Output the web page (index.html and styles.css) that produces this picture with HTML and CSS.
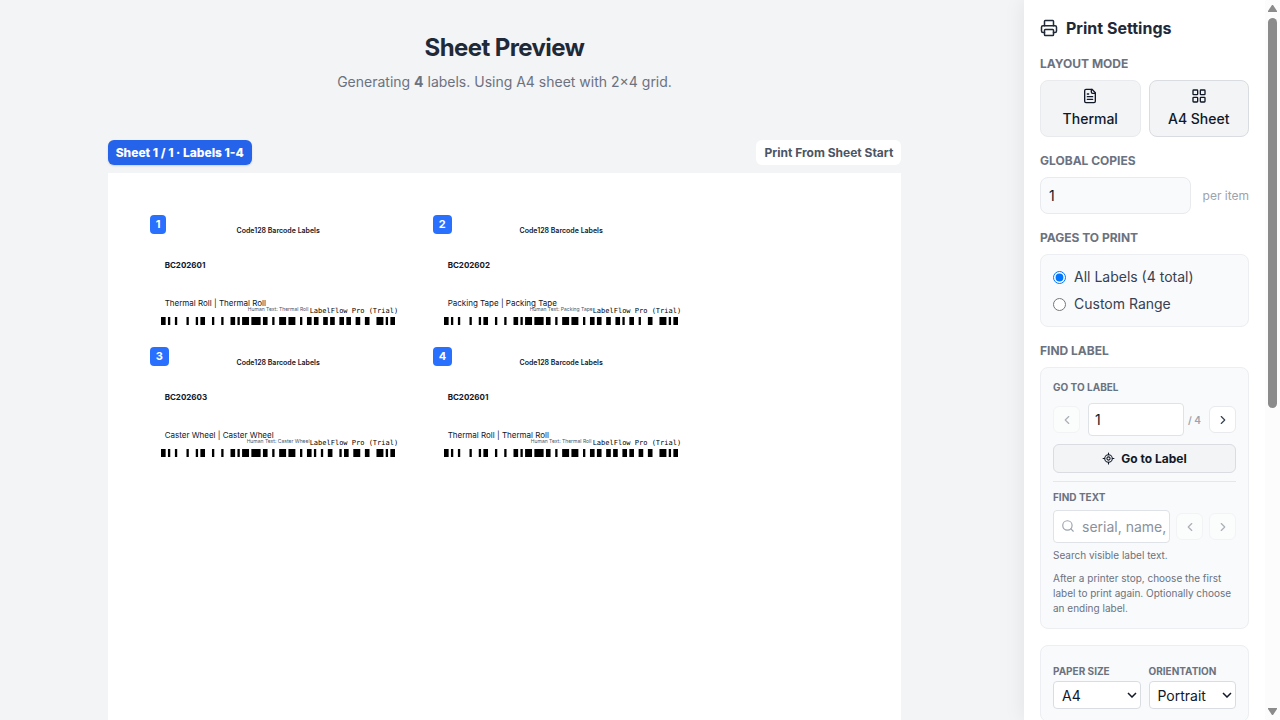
FILE: index.html
```html
<!DOCTYPE html>
<html lang="en">
<head>
  <meta charset="UTF-8">
  <meta name="viewport" content="width=device-width, initial-scale=1.0">
  <title>Print Settings</title>
  <link rel="stylesheet" href="styles.css">
</head>
<body>

  <div class="app">
    <main class="preview">
      <header class="preview-header">
        <h1>Sheet Preview</h1>
        <p>Generating <strong>4</strong> labels. Using A4 sheet with 2×4 grid.</p>
      </header>

      <section class="sheet-wrap">
        <div class="sheet-bar">
          <span class="sheet-tag">Sheet 1 / 1 · Labels 1-4</span>
          <button type="button" class="sheet-print">Print From Sheet Start</button>
        </div>

        <div class="sheet">
          <article class="label">
            <span class="badge">1</span>
            <h2 class="label-title">Code128 Barcode Labels</h2>
            <p class="label-code">BC202601</p>
            <p class="label-name">Thermal Roll | Thermal Roll</p>
            <p class="label-human">Human Text: Thermal Roll</p>
            <p class="watermark">LabelFlow Pro (Trial)</p>
            <svg class="barcode" viewBox="0 0 101 8" preserveAspectRatio="none" role="img" aria-label="BC202601"><path d="M0 4H101" stroke-dasharray="2 1 1 2 1 4 1 3 1 1 2 3 1 3 1 3 2 1 1 1 3 1 4 1 2 2 1 2 3 1 3 2 1 2 2 1 2 2 2 1 2 2 2 1 2 2 2 2 2 3 3 1 1 1 2 9"/></svg>
          </article>

          <article class="label">
            <span class="badge">2</span>
            <h2 class="label-title">Code128 Barcode Labels</h2>
            <p class="label-code">BC202602</p>
            <p class="label-name">Packing Tape | Packing Tape</p>
            <p class="label-human">Human Text: Packing Tape</p>
            <p class="watermark">LabelFlow Pro (Trial)</p>
            <svg class="barcode" viewBox="0 0 101 8" preserveAspectRatio="none" role="img" aria-label="BC202602"><path d="M0 4H101" stroke-dasharray="2 1 1 2 1 4 1 3 1 1 2 3 1 3 1 3 2 1 1 1 3 1 4 1 2 2 1 2 3 1 3 2 1 2 2 1 2 2 2 2 2 1 1 2 2 2 1 3 2 3 3 1 1 1 2 9"/></svg>
          </article>

          <article class="label">
            <span class="badge">3</span>
            <h2 class="label-title">Code128 Barcode Labels</h2>
            <p class="label-code">BC202603</p>
            <p class="label-name">Caster Wheel | Caster Wheel</p>
            <p class="label-human">Human Text: Caster Wheel</p>
            <p class="watermark">LabelFlow Pro (Trial)</p>
            <svg class="barcode" viewBox="0 0 101 8" preserveAspectRatio="none" role="img" aria-label="BC202603"><path d="M0 4H101" stroke-dasharray="2 1 1 2 1 4 1 3 1 1 2 3 1 3 1 3 2 1 1 1 3 1 4 1 2 2 1 2 3 1 3 2 1 2 2 1 1 2 1 2 2 3 1 1 2 2 3 2 2 3 3 1 1 1 2 9"/></svg>
          </article>

          <article class="label">
            <span class="badge">4</span>
            <h2 class="label-title">Code128 Barcode Labels</h2>
            <p class="label-code">BC202601</p>
            <p class="label-name">Thermal Roll | Thermal Roll</p>
            <p class="label-human">Human Text: Thermal Roll</p>
            <p class="watermark">LabelFlow Pro (Trial)</p>
            <svg class="barcode" viewBox="0 0 101 8" preserveAspectRatio="none" role="img" aria-label="BC202601"><path d="M0 4H101" stroke-dasharray="2 1 1 2 1 4 1 3 1 1 2 3 1 3 1 3 2 1 1 1 3 1 4 1 2 2 1 2 3 1 3 2 1 2 2 1 2 2 2 1 2 2 2 1 2 2 2 2 2 3 3 1 1 1 2 9"/></svg>
          </article>
        </div>
      </section>
    </main>

    <aside class="settings">
      <div class="settings-body">
        <h2 class="settings-title">
          <svg class="icon" width="18" height="18" viewBox="0 0 24 24"><path d="M6 18H4a2 2 0 0 1-2-2v-5a2 2 0 0 1 2-2h16a2 2 0 0 1 2 2v5a2 2 0 0 1-2 2h-2"/><path d="M6 9V3a1 1 0 0 1 1-1h10a1 1 0 0 1 1 1v6"/><rect x="6" y="14" width="12" height="8" rx="1"/></svg>
          Print Settings
        </h2>

        <section class="group">
          <h3>Layout Mode</h3>
          <div class="modes">
            <button type="button" class="mode">
              <svg class="icon" width="16" height="16" viewBox="0 0 24 24"><path d="M15 2H6a2 2 0 0 0-2 2v16a2 2 0 0 0 2 2h12a2 2 0 0 0 2-2V7Z"/><path d="M14 2v4a2 2 0 0 0 2 2h4"/><path d="M10 9H8M16 13H8M16 17H8"/></svg>
              Thermal
            </button>
            <button type="button" class="mode active">
              <svg class="icon" width="16" height="16" viewBox="0 0 24 24"><rect x="3" y="3" width="7" height="7" rx="1"/><rect x="14" y="3" width="7" height="7" rx="1"/><rect x="14" y="14" width="7" height="7" rx="1"/><rect x="3" y="14" width="7" height="7" rx="1"/></svg>
              A4 Sheet
            </button>
          </div>
        </section>

        <section class="group">
          <h3><label for="copies">Global Copies</label></h3>
          <div class="copies">
            <input type="text" inputmode="numeric" id="copies" value="1">
            <span>per item</span>
          </div>
        </section>

        <section class="group">
          <h3>Pages to Print</h3>
          <div class="card range">
            <label><input type="radio" name="range" checked> All Labels (4 total)</label>
            <label><input type="radio" name="range"> Custom Range</label>
          </div>
        </section>

        <section class="group">
          <h3>Find Label</h3>
          <div class="card find">
            <label class="small-label" for="goto">Go to Label</label>
            <div class="find-row">
              <button type="button" class="step" aria-label="Previous label" disabled><svg class="icon" width="14" height="14" viewBox="0 0 24 24"><path d="m15 18-6-6 6-6"/></svg></button>
              <div class="goto-field">
                <input type="text" inputmode="numeric" id="goto" value="1">
                <span class="total">/ 4</span>
              </div>
              <button type="button" class="step" aria-label="Next label"><svg class="icon" width="14" height="14" viewBox="0 0 24 24"><path d="m9 18 6-6-6-6"/></svg></button>
            </div>
            <button type="button" class="goto">
              <svg class="icon" width="13" height="13" viewBox="0 0 24 24"><path d="M2 12h3M19 12h3M12 2v3M12 19v3"/><circle cx="12" cy="12" r="7"/><circle cx="12" cy="12" r="3"/></svg>
              Go to Label
            </button>

            <div class="find-text">
              <label class="small-label" for="search">Find Text</label>
              <div class="find-row">
                <div class="search">
                  <svg class="icon" width="14" height="14" viewBox="0 0 24 24"><circle cx="11" cy="11" r="8"/><path d="m21 21-4-4"/></svg>
                  <input type="text" id="search" placeholder="serial, name, code">
                </div>
                <button type="button" class="step" aria-label="Previous match" disabled><svg class="icon" width="14" height="14" viewBox="0 0 24 24"><path d="m15 18-6-6 6-6"/></svg></button>
                <button type="button" class="step" aria-label="Next match" disabled><svg class="icon" width="14" height="14" viewBox="0 0 24 24"><path d="m9 18 6-6-6-6"/></svg></button>
              </div>
              <p class="hint">Search visible label text.</p>
            </div>
            <p class="hint">After a printer stop, choose the first label to print again. Optionally choose an ending label.</p>
          </div>
        </section>

        <section class="card paper">
          <div>
            <label class="small-label" for="paper">Paper Size</label>
            <select id="paper"><option>A4</option><option>Letter</option></select>
          </div>
          <div>
            <label class="small-label" for="orientation">Orientation</label>
            <select id="orientation"><option>Portrait</option><option>Landscape</option></select>
          </div>
        </section>
      </div>

      <div class="scrollbar" aria-hidden="true">
        <svg width="9" height="7" viewBox="0 0 9 7"><path d="M4 0h1l4 6v1H0V6z"/></svg>
        <div class="track"><div class="thumb"></div></div>
        <svg width="9" height="7" viewBox="0 0 9 7"><path d="M4 7h1l4-6V0H0v1z"/></svg>
      </div>
    </aside>
  </div>

</body>
</html>
```
FILE: styles.css
```css
* {
  box-sizing: border-box;
}

body {
  margin: 0;
  font-family: Inter, "Liberation Sans", sans-serif;
  color: #1f2937;
  background: #f3f4f6;
}

h1, h2, h3, p {
  margin: 0;
}

button, input, select {
  font-family: inherit;
  color: #111827;
}

.icon {
  flex: none;
  fill: none;
  stroke: currentColor;
  stroke-width: 2;
  stroke-linecap: round;
  stroke-linejoin: round;
}

.app {
  display: flex;
  height: 100vh;
  overflow: hidden;
}

/* preview */
.preview {
  flex: 1;
  min-width: 0;
  overflow: hidden;
  padding: 32px 47px 32px 32px;
}

.preview-header {
  text-align: center;
  margin-bottom: 48px;
}

.preview-header h1 {
  font-size: 24px;
  line-height: 32px;
  font-weight: 700;
  letter-spacing: -0.025em;
}

.preview-header p {
  margin-top: 8px;
  font-size: 14px;
  line-height: 20px;
  color: #6b7280;
}

.sheet-wrap {
  width: 210mm;
  max-width: 100%;
  margin: 0 auto;
}

.sheet-bar {
  display: flex;
  justify-content: space-between;
  align-items: center;
  margin-bottom: 8px;
}

.sheet-tag,
.sheet-print {
  padding: 4px 8px;
  font-size: 12px;
  line-height: 17px;
  font-weight: 700;
  border-radius: 6px;
}

.sheet-tag {
  font-weight: 800;
  color: #fff;
  background: #2563eb;
  box-shadow: 0 1px 2px rgba(0, 0, 0, 0.15);
}

.sheet-print {
  color: #4b5563;
  background: #fff;
  border: 0;
}

.sheet {
  display: grid;
  grid-template-columns: 257px 257px;
  column-gap: 26px;
  align-content: start;
  min-height: 297mm;
  padding: 42px;
  background: #fff;
}

.label {
  position: relative;
  height: 132px;
  padding-top: 11px;
  color: #0f172a;
}

.badge {
  position: absolute;
  top: 0;
  left: 0;
  padding: 2px 6px;
  font-size: 11px;
  line-height: 15px;
  font-weight: 700;
  color: #fff;
  background: #2970ff;
  border-radius: 4px;
}

.label-title {
  font-size: 7px;
  line-height: 10px;
  font-weight: 600;
  text-align: center;
}

.label-code {
  margin: 23px 15px 0;
  font-size: 8px;
  line-height: 12px;
  font-weight: 700;
}

.label-name {
  margin: 26px 15px 0;
  font-size: 8px;
  line-height: 12px;
}

.label-human {
  position: absolute;
  top: 91px;
  left: 0;
  right: 0;
  font-size: 5px;
  line-height: 6px;
  text-align: center;
  color: #475569;
}

/* trial mark printed over every label */
.watermark {
  position: absolute;
  top: 91px;
  left: 160px;
  font-family: "DejaVu Sans Mono", monospace;
  font-size: 7px;
  line-height: 10px;
  color: #000;
  white-space: nowrap;
}

.barcode {
  display: block;
  width: 234px;
  height: 8px;
  margin: 8px auto 0 11px;
  fill: none;
  stroke: #000;
  stroke-width: 8;
}

/* settings */
.settings {
  display: flex;
  width: 256px;
  flex: none;
  background: #fff;
  box-shadow: 0 0 20px rgba(0, 0, 0, 0.08);
}

.settings-body {
  flex: 1;
  min-width: 0;
  overflow-y: auto;
  padding: 16px;
}

.scrollbar {
  display: flex;
  flex-direction: column;
  align-items: center;
  width: 15px;
  padding: 5px 0;
  background: #fcfcfc;
}

.scrollbar svg {
  fill: #8b8b8b;
}

.track {
  flex: 1;
  width: 9px;
  padding: 6px 0;
}

.thumb {
  height: 57%;
  background: #8b8b8b;
  border-radius: 5px;
}

.settings-title {
  display: flex;
  align-items: center;
  gap: 8px;
  margin-bottom: 16px;
  font-size: 16px;
  line-height: 24px;
  font-weight: 700;
}

.group {
  margin-bottom: 16px;
}

.group h3 {
  margin-bottom: 8px;
  font-size: 12px;
  line-height: 16px;
  font-weight: 700;
  color: #6b7280;
  text-transform: uppercase;
}

.modes {
  display: grid;
  grid-template-columns: 1fr 1fr;
  gap: 8px;
}

.mode {
  display: flex;
  flex-direction: column;
  align-items: center;
  gap: 4px;
  padding: 7px;
  font-size: 14px;
  line-height: 21px;
  font-weight: 500;
  background: #f3f4f6;
  border: 1px solid #e8eaed;
  border-radius: 8px;
}

.mode.active {
  border-color: #d9dce1;
}

.copies {
  display: flex;
  align-items: center;
  gap: 12px;
}

.copies input {
  flex: 1;
  min-width: 0;
  height: 37px;
  padding: 0 8px;
  font-size: 14px;
  background: #f9fafb;
  border: 1px solid #e8eaed;
  border-radius: 8px;
}

.copies span {
  font-size: 12px;
  color: #9ca3af;
}

.card {
  padding: 12px;
  background: #f9fafb;
  border: 1px solid #eceef1;
  border-radius: 8px;
}

.range {
  display: grid;
  gap: 7px;
}

.range label {
  display: flex;
  align-items: center;
  gap: 8px;
  font-size: 14px;
  line-height: 20px;
  color: #374151;
}

.range input {
  width: 13px;
  height: 13px;
  margin: 0;
}

.small-label {
  display: block;
  font-size: 10px;
  line-height: 15px;
  font-weight: 700;
  color: #6b7280;
  text-transform: uppercase;
}

.find {
  display: grid;
  gap: 8px;
}

.find-row {
  display: flex;
  align-items: center;
  gap: 6px;
}

.find-row input {
  min-width: 0;
  width: 100%;
  height: 33px;
  padding: 0 6px;
  font-size: 14px;
  background: #fff;
  border: 1px solid #dfe2e6;
  border-radius: 4px;
}

.goto-field {
  display: flex;
  flex: 1;
  min-width: 0;
  align-items: center;
  gap: 4px;
  margin: 0 2px;
}

.step {
  display: flex;
  align-items: center;
  justify-content: center;
  flex: none;
  width: 27px;
  height: 27px;
  padding: 0;
  color: #374151;
  background: #fff;
  border: 1px solid #e8eaed;
  border-radius: 6px;
}

.step:disabled {
  opacity: 0.4;
}

.total {
  flex: none;
  font-size: 10px;
  font-weight: 600;
  color: #9ca3af;
}

.goto {
  display: flex;
  align-items: center;
  justify-content: center;
  gap: 6px;
  height: 29px;
  font-size: 12px;
  font-weight: 700;
  background: #f3f4f6;
  border: 1px solid #d9dce1;
  border-radius: 6px;
}

.find-text {
  display: grid;
  gap: 5px;
  padding-top: 8px;
  border-top: 1px solid #e5e7eb;
}

.search {
  position: relative;
  flex: 1;
  min-width: 0;
}

.search .icon {
  position: absolute;
  top: 9px;
  left: 8px;
  color: #9ca3af;
}

.search .icon + input {
  display: block;
  padding: 0 3px 0 28px;
}

.search input::placeholder {
  color: #8b919c;
}

.hint {
  font-size: 10px;
  line-height: 15px;
  color: #6b7280;
}

.paper {
  display: grid;
  grid-template-columns: 1fr 1fr;
  gap: 8px;
  padding-top: 18px;
}

.paper select {
  appearance: none;
  width: 100%;
  height: 28px;
  margin-top: 2px;
  padding: 0 8px;
  font-size: 14px;
  background: #fff url('data:image/svg+xml,<svg xmlns="http://www.w3.org/2000/svg" width="10" height="6" fill="none" stroke="%23111827" stroke-width="1.5"><path d="M1 1l4 4 4-4"/></svg>') no-repeat right 3px center;
  border: 1px solid #d9dce1;
  border-radius: 4px;
}
```
